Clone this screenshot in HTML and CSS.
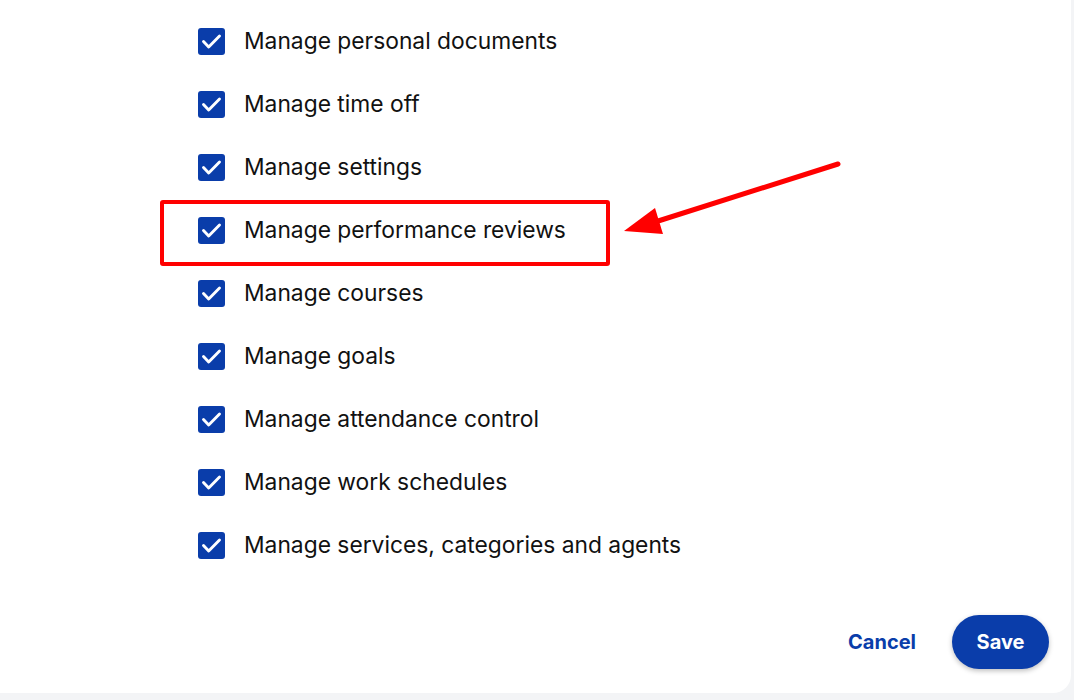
FILE: index.html
```html
<!DOCTYPE html>
<html>
<head>
<meta charset="utf-8">
<link rel="stylesheet" href="styles.css">
</head>
<body>
<div class="modal">
  <ul class="perms">
    <li class="perm"><span class="cb"><svg viewBox="0 0 27 27"><path d="M5.5 13.5l5.2 5.4L21.5 8"/></svg></span><span class="label">Manage personal documents</span></li>
    <li class="perm"><span class="cb"><svg viewBox="0 0 27 27"><path d="M5.5 13.5l5.2 5.4L21.5 8"/></svg></span><span class="label">Manage time off</span></li>
    <li class="perm"><span class="cb"><svg viewBox="0 0 27 27"><path d="M5.5 13.5l5.2 5.4L21.5 8"/></svg></span><span class="label">Manage settings</span></li>
    <li class="perm highlight"><span class="cb"><svg viewBox="0 0 27 27"><path d="M5.5 13.5l5.2 5.4L21.5 8"/></svg></span><span class="label">Manage performance reviews</span><span class="hl-box"></span></li>
    <li class="perm"><span class="cb"><svg viewBox="0 0 27 27"><path d="M5.5 13.5l5.2 5.4L21.5 8"/></svg></span><span class="label">Manage courses</span></li>
    <li class="perm"><span class="cb"><svg viewBox="0 0 27 27"><path d="M5.5 13.5l5.2 5.4L21.5 8"/></svg></span><span class="label">Manage goals</span></li>
    <li class="perm"><span class="cb"><svg viewBox="0 0 27 27"><path d="M5.5 13.5l5.2 5.4L21.5 8"/></svg></span><span class="label">Manage attendance control</span></li>
    <li class="perm"><span class="cb"><svg viewBox="0 0 27 27"><path d="M5.5 13.5l5.2 5.4L21.5 8"/></svg></span><span class="label">Manage work schedules</span></li>
    <li class="perm"><span class="cb"><svg viewBox="0 0 27 27"><path d="M5.5 13.5l5.2 5.4L21.5 8"/></svg></span><span class="label">Manage services, categories and agents</span></li>
  </ul>
  <div class="footer">
    <button class="btn-cancel">Cancel</button>
    <button class="btn-save">Save</button>
  </div>
  <svg class="arrow" width="1074" height="700" viewBox="0 0 1074 700">
    <line x1="838" y1="164" x2="655" y2="222" />
    <polygon points="624,231 655,208 663,234" />
  </svg>
</div>
</body>
</html>
```

FILE: styles.css
```css
* { box-sizing: border-box; }
html, body { margin: 0; padding: 0; }
body {
  background: #f3f4f6;
  width: 1074px;
  height: 700px;
  overflow: hidden;
  font-family: Inter, "Liberation Sans", sans-serif;
}
.modal {
  position: relative;
  width: 1071px;
  height: 693px;
  background: #ffffff;
  border-bottom-right-radius: 18px;
}
.perms {
  list-style: none;
  margin: 0;
  padding: 9px 0 0 198px;
}
.perm {
  position: relative;
  height: 63px;
  display: flex;
  align-items: center;
}
.cb {
  width: 27px;
  height: 27px;
  border-radius: 3px;
  background: #0a3daa;
  display: flex;
  align-items: center;
  justify-content: center;
  flex: none;
  margin-top: 2px;
}
.cb svg {
  width: 27px;
  height: 27px;
  fill: none;
  stroke: #ffffff;
  stroke-width: 2.9;
  stroke-linecap: round;
  stroke-linejoin: round;
}
.label {
  margin-left: 19px;
  font-size: 22.8px;
  color: #111111;
  letter-spacing: 0;
}
.hl-box {
  position: absolute;
  left: -38px;
  top: 2px;
  width: 450px;
  height: 66px;
  border: 4px solid #ff0000;
  border-radius: 3px;
}
.footer {
  position: absolute;
  right: 22px;
  bottom: 24px;
  display: flex;
  align-items: center;
  gap: 36px;
}
.btn-cancel {
  border: none;
  background: none;
  font-family: Inter, "Liberation Sans", sans-serif;
  font-size: 20px;
  font-weight: 700;
  color: #0a3daa;
  padding: 0;
}
.btn-save {
  border: none;
  background: #0a3daa;
  color: #ffffff;
  font-family: Inter, "Liberation Sans", sans-serif;
  font-size: 20px;
  font-weight: 700;
  width: 97px;
  height: 54px;
  border-radius: 27px;
  box-shadow: 0 2px 5px rgba(0,0,0,0.25);
}
.arrow {
  position: absolute;
  left: 0;
  top: 0;
  pointer-events: none;
}
.arrow line {
  stroke: #ff0000;
  stroke-width: 5;
  stroke-linecap: round;
}
.arrow polygon {
  fill: #ff0000;
}
```
